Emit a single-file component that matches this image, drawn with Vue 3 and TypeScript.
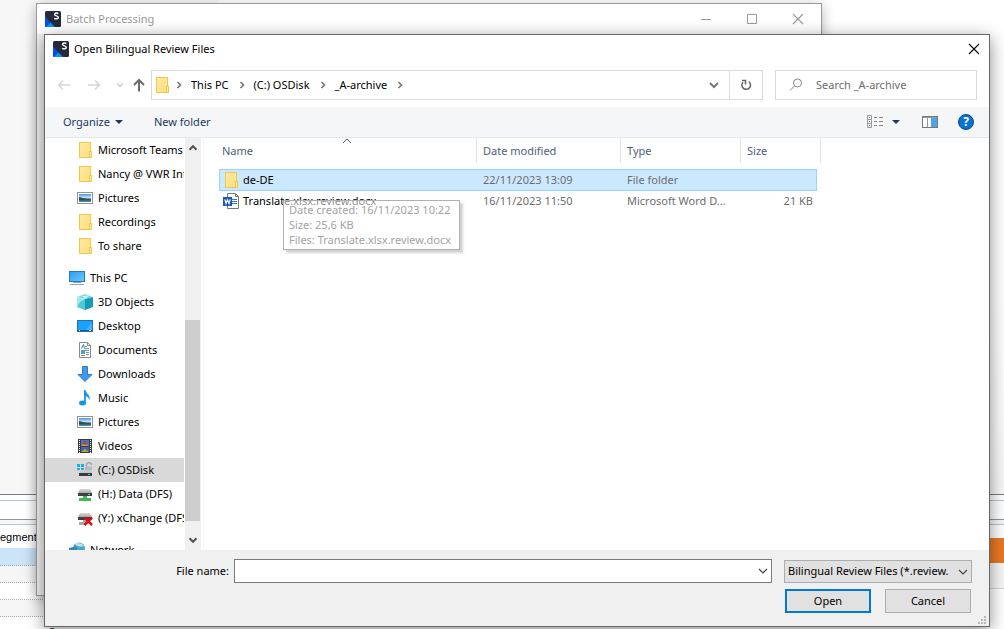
<script setup lang="ts">
import { ref } from 'vue'

interface TreeItem {
  label: string
  icon: string
  root?: boolean
  selected?: boolean
}

interface FileRow {
  name: string
  icon: string
  modified: string
  type: string
  size: string
}

const tree: TreeItem[] = [
  { label: 'Microsoft Teams', icon: 'folder' },
  { label: 'Nancy @ VWR International', icon: 'folder' },
  { label: 'Pictures', icon: 'pictures' },
  { label: 'Recordings', icon: 'folder' },
  { label: 'To share', icon: 'folder' },
  { label: 'This PC', icon: 'pc', root: true },
  { label: '3D Objects', icon: 'objects' },
  { label: 'Desktop', icon: 'desktop' },
  { label: 'Documents', icon: 'documents' },
  { label: 'Downloads', icon: 'downloads' },
  { label: 'Music', icon: 'music' },
  { label: 'Pictures', icon: 'pictures' },
  { label: 'Videos', icon: 'videos' },
  { label: '(C:) OSDisk', icon: 'osdisk', selected: true },
  { label: '(H:) Data (DFS)', icon: 'netdrive' },
  { label: '(Y:) xChange (DFS)', icon: 'lostdrive' },
  { label: 'Network', icon: 'network', root: true },
]

const files: FileRow[] = [
  { name: 'de-DE', icon: 'folder', modified: '22/11/2023 13:09', type: 'File folder', size: '' },
  { name: 'Translate.xlsx.review.docx', icon: 'word', modified: '16/11/2023 11:50', type: 'Microsoft Word D...', size: '21 KB' },
]

const crumbs = ['This PC', '(C:) OSDisk', '_A-archive']
const active = ref('de-DE')
const fileName = ref('')
const search = ref('')
</script>

<template>
  <main class="screen">
    <svg class="sprite" aria-hidden="true">
      <defs>
        <linearGradient id="g-folder" x1="0" y1="0" x2="1" y2="1"><stop offset="0" stop-color="#ffe9a2" /><stop offset="1" stop-color="#ffdf7e" /></linearGradient>
        <linearGradient id="g-blue" x1="0" y1="0" x2="1" y2="1"><stop offset="0" stop-color="#2a9ff5" /><stop offset="1" stop-color="#6cc8fb" /></linearGradient>
        <linearGradient id="g-sky" x1="0" y1="0" x2="0" y2="1"><stop offset="0" stop-color="#4c8ff0" /><stop offset=".5" stop-color="#d8ecf4" /><stop offset=".6" stop-color="#3f6a70" /><stop offset="1" stop-color="#5b8fa8" /></linearGradient>
        <linearGradient id="g-drive" x1="0" y1="0" x2="0" y2="1"><stop offset="0" stop-color="#d8d8d8" /><stop offset="1" stop-color="#a8a8a8" /></linearGradient>
      </defs>
      <symbol id="studio" viewBox="0 0 16 16">
        <rect width="16" height="16" rx="1.5" fill="#252a3a" />
        <path d="M0 5.500L9.500 16H1.500A1.500 1.500 0 0 1 0 14.500Z" fill="#0050f0" />
        <path d="M1 16L5.500 11.500 10 16Z" fill="#0a90f8" />
        <path d="M13.300 2.600C12.500 1.900 9.700 1.600 9.700 3.400C9.700 5.300 13.300 4.500 13.300 6.500C13.300 8.200 10.300 8.100 9.300 7.200" fill="none" stroke="#fff" stroke-width="1.500" />
      </symbol>
      <symbol id="folder" viewBox="0 0 16 16">
        <rect x="2.500" y=".5" width="11" height="15" fill="url(#g-folder)" stroke="#eec94e" />
        <rect x="12.500" y="9.500" width="2" height="6" fill="#ffeaa5" stroke="#eec94e" />
      </symbol>
      <symbol id="pictures" viewBox="0 0 16 16">
        <rect x=".5" y="2.500" width="15" height="11" fill="#fff" stroke="#949494" />
        <rect x="2" y="4" width="12" height="8" fill="url(#g-sky)" />
        <path d="M2 7C5 7.500 8 9 14 9.500V10.500H2Z" fill="#24525a" />
      </symbol>
      <symbol id="pc" viewBox="0 0 16 16">
        <rect x=".5" y="1.500" width="15" height="10" fill="url(#g-blue)" stroke="#287aa8" />
        <path d="M4 12.500H12M1 14.500H15" stroke="#90a8b8" />
      </symbol>
      <symbol id="objects" viewBox="0 0 16 16">
        <path d="M0 3L8 0L16 3L8 5Z" fill="#7ddbe5" />
        <path d="M0 3L8 5V16L0 13Z" fill="#9fe6ee" />
        <path d="M3 8L8 5V16L0 13Z" fill="#4fc8d8" />
        <path d="M16 3L8 5V16L16 13Z" fill="#139db4" />
        <path d="M5 2L12 1.500L8 5Z" fill="#c5f4f6" />
      </symbol>
      <symbol id="desktop" viewBox="0 0 16 16">
        <rect x=".5" y="2.500" width="15" height="11" fill="#18a2fb" stroke="#2470a0" />
        <path d="M9 12L15 4V12Z" fill="#40b4ff" />
        <path d="M1 12.500H15" stroke="#0b5c9a" />
        <path d="M2 12.500H3M12 12.500H14" stroke="#fff" />
      </symbol>
      <symbol id="documents" viewBox="0 0 16 16">
        <path d="M2.500 .5H10.500L13.500 3.500V15.500H2.500Z" fill="#fff" stroke="#8a8a8a" />
        <path d="M10.500 .5V3.500H13.500" fill="none" stroke="#8a8a8a" />
        <path d="M4.500 6.500L6.500 2.500L7.500 6.500" fill="none" stroke="#2c83bd" />
        <path d="M8 4.500H10M8 6.500H12M4 8.500H12M9 10.500H12M9 12.500H12M4 13.500H8" stroke="#6b93aa" />
        <rect x="4" y="9" width="4" height="3" fill="#4d9fcb" />
      </symbol>
      <symbol id="downloads" viewBox="0 0 16 16">
        <path d="M5.500 .5H10.500V8.500H15L8 15.500L1 8.500H5.500Z" fill="#3f9ae8" stroke="#2c7cc9" />
      </symbol>
      <symbol id="music" viewBox="0 0 16 16">
        <ellipse cx="5.500" cy="13" rx="3.500" ry="2.500" fill="#1494ec" />
        <path d="M7 0H8.500C9 4 14 5 12.500 10.500C12.500 8 10 6.500 8.800 6V13H7Z" fill="#1494ec" />
      </symbol>
      <symbol id="videos" viewBox="0 0 16 16">
        <rect x="1" y="1" width="14" height="14" fill="#3b3b3b" />
        <rect x="4" y="2" width="8" height="6" fill="#4b72cf" />
        <rect x="4" y="9" width="8" height="5" fill="#3568bd" />
        <path d="M4 8L7 5L12 8ZM4 14L8 11L12 14Z" fill="#d19d2d" />
        <circle cx="8" cy="5" r="2" fill="#9b523b" />
        <path d="M2.500 2V15M13.500 2V15" stroke="#fff" stroke-dasharray="1 1" />
      </symbol>
      <symbol id="osdisk" viewBox="0 0 16 16">
        <path d="M0 2H3V5H0ZM4 2H7V5H4ZM0 6H3V8H0ZM4 6H7V8H4Z" fill="#18b0ee" />
        <path d="M9.500 5V3C9.500 0 14.500 0 14.500 3" fill="none" stroke="#a0a8ae" stroke-width="1.500" />
        <path d="M8 4.500H15V8.500H8Z" fill="#b3bcc2" />
        <path d="M3 9H14L15 11H2Z" fill="#c7c7c7" />
        <rect x="2" y="11" width="13" height="3" fill="#383c3e" />
        <rect x="11" y="12" width="2" height="1" fill="#45df72" />
      </symbol>
      <symbol id="netdrive" viewBox="0 0 16 16">
        <path d="M3 3H13L15 7H1Z" fill="url(#g-drive)" />
        <rect x="1" y="7" width="14" height="3" fill="#3b4245" />
        <rect x="11" y="8" width="2" height="1" fill="#45df72" />
        <path d="M6 10H10V12H14V15H2V12H6Z" fill="#45b555" />
      </symbol>
      <symbol id="lostdrive" viewBox="0 0 16 16">
        <path d="M3 3H13L15 7H1Z" fill="url(#g-drive)" />
        <rect x="1" y="7" width="14" height="3" fill="#3b4245" />
        <path d="M6 10H9V15H2V12H6Z" fill="#a7a7a7" />
        <path d="M7.500 7.500L15 15M15 7.500L7.500 15" stroke="#d90f16" stroke-width="2.500" />
      </symbol>
      <symbol id="network" viewBox="0 0 16 16">
        <circle cx="10" cy="6.500" r="6" fill="#4aa5cd" />
        <path d="M6 2C8 0 13 1 15 4C12 5 8 5 6 2Z" fill="#b9e4f1" />
        <path d="M0 6L8 4V12H0Z" fill="#3487b9" />
      </symbol>
      <symbol id="word" viewBox="0 0 16 16">
        <path d="M4.500 .5H12.500L15.500 3.500V15.500H4.500Z" fill="#fff" stroke="#777" />
        <path d="M12.500 .5V3.500H15.500" fill="none" stroke="#777" />
        <path d="M9 6.500H14M9 8.500H14M9 10.500H14" stroke="#3274cf" />
        <rect y="4" width="9" height="9" fill="#1858bd" />
        <path d="M1.800 6.300L3 10.500L4.500 6.800L6 10.500L7.200 6.300" fill="none" stroke="#fff" stroke-width="1.200" />
      </symbol>
      <symbol id="chevron" viewBox="0 0 16 16">
        <path d="M4 6L8 10L12 6" fill="none" stroke="currentColor" stroke-width="var(--w, 1.500)" />
      </symbol>
      <symbol id="cross" viewBox="0 0 16 16">
        <path d="M3 3L13 13M13 3L3 13" fill="none" stroke="currentColor" stroke-width="1.100" />
      </symbol>
    </svg>

    <div class="backdrop" aria-hidden="true">
      <div class="strip left">
        <div class="pane"></div>
        <div class="tabs"></div>
        <div class="gap"></div>
        <div class="caption">egments</div>
        <div class="band"></div>
        <div class="line"></div>
        <div class="line"></div>
        <div class="line"></div>
        <div class="line number">8</div>
      </div>
      <div class="strip right">
        <div class="pane"></div>
        <div class="tabs"></div>
        <div class="gap"></div>
        <div class="spacer"></div>
        <div class="orange"></div>
        <div class="cell"></div>
      </div>
    </div>

    <section class="window batch" aria-label="Batch Processing">
      <header class="titlebar">
        <svg class="icon"><use href="#studio" /></svg>
        <span class="title">Batch Processing</span>
        <div class="controls">
          <button type="button" aria-label="Minimize"><svg viewBox="0 0 16 16"><path d="M3 8.500H13" stroke="currentColor" /></svg></button>
          <button type="button" aria-label="Maximize"><svg viewBox="0 0 16 16"><path d="M3.500 3.500H12.500V12.500H3.500Z" fill="none" stroke="currentColor" /></svg></button>
          <button type="button" aria-label="Close"><svg><use href="#cross" /></svg></button>
        </div>
      </header>
      <div class="batch-body"></div>
    </section>

    <section class="window dialog" role="dialog" aria-label="Open Bilingual Review Files">
      <header class="titlebar">
        <svg class="icon"><use href="#studio" /></svg>
        <h1 class="title">Open Bilingual Review Files</h1>
        <button type="button" class="close" aria-label="Close"><svg><use href="#cross" /></svg></button>
      </header>

      <nav class="navbar" aria-label="Location">
        <div class="history">
          <button type="button" aria-label="Back" disabled><svg viewBox="0 0 16 16"><path d="M14 8H3M7 3.500L2.500 8L7 12.500" /></svg></button>
          <button type="button" aria-label="Forward" disabled><svg viewBox="0 0 16 16"><path d="M2 8H13M9 3.500L13.500 8L9 12.500" /></svg></button>
          <button type="button" class="small" aria-label="Recent locations" disabled><svg><use href="#chevron" /></svg></button>
          <button type="button" class="up" aria-label="Up"><svg viewBox="0 0 16 16"><path d="M8 14.500V3M3 8L8 3L13 8" /></svg></button>
        </div>
        <div class="address">
          <svg class="icon"><use href="#folder" /></svg>
          <svg class="arrow"><use href="#chevron" /></svg>
          <template v-for="crumb in crumbs" :key="crumb">
            <button type="button" class="crumb">{{ crumb }}</button>
            <svg class="arrow"><use href="#chevron" /></svg>
          </template>
          <button type="button" class="drop" aria-label="Previous locations"><svg><use href="#chevron" /></svg></button>
          <button type="button" class="refresh" aria-label="Refresh">
            <svg viewBox="0 0 16 16"><path d="M10.800 4.600A4.300 4.300 0 1 1 5 5.200" /><path d="M4 3.500H7.500V7.500" /></svg>
          </button>
        </div>
        <label class="search">
          <svg viewBox="0 0 16 16"><circle cx="9.500" cy="6" r="4" /><path d="M6.500 9L2 13.500" /></svg>
          <input v-model="search" type="text" placeholder="Search _A-archive" aria-label="Search _A-archive" />
        </label>
      </nav>

      <div class="toolbar">
        <button type="button">Organize<i class="caret"></i></button>
        <button type="button" class="new">New folder</button>
        <div class="views">
          <button type="button" aria-label="Change your view">
            <svg class="list" viewBox="0 0 16 16">
              <path d="M.5 1.500H4.500V13.500H.5ZM.5 5.500H4.500M.5 9.500H4.500" fill="none" stroke="#9a9a9a" />
              <path d="M2 3.500H3M2 7.500H3M2 11.500H3" stroke="#4d6d8b" />
              <path d="M7 3.500H10M7 7.500H10M7 11.500H10M12 3.500H16M12 7.500H16M12 11.500H16" stroke="#858585" />
            </svg>
            <i class="caret"></i>
          </button>
          <button type="button" aria-label="Show the preview pane">
            <svg viewBox="0 0 16 16">
              <rect x=".5" y="2.500" width="15" height="11" fill="#fff" stroke="#777" />
              <path d="M1 3.500H15M5.500 4V13" stroke="#999" />
              <rect x="9" y="4" width="6" height="9" fill="#4ba4ec" />
            </svg>
          </button>
          <button type="button" class="help" aria-label="Get help">?</button>
        </div>
      </div>

      <div class="content">
        <aside class="sidebar">
          <ul class="tree">
            <li v-for="(item, i) in tree" :key="i" :class="{ root: item.root, selected: item.selected }">
              <svg class="icon"><use :href="'#' + item.icon" /></svg>
              <span>{{ item.label }}</span>
            </li>
          </ul>
          <div class="scrollbar" aria-hidden="true">
            <svg class="flip"><use href="#chevron" /></svg>
            <div class="track"><div class="thumb"></div></div>
            <svg><use href="#chevron" /></svg>
          </div>
        </aside>

        <div class="list-pane">
          <table>
            <colgroup><col class="c-name" /><col class="c-date" /><col class="c-type" /><col class="c-size" /></colgroup>
            <thead>
              <tr>
                <th scope="col">Name<svg class="sort"><use href="#chevron" /></svg></th>
                <th scope="col">Date modified</th>
                <th scope="col">Type</th>
                <th scope="col">Size</th>
              </tr>
            </thead>
            <tbody>
              <tr v-for="file in files" :key="file.name" :class="{ active: active === file.name }" @click="active = file.name">
                <td><div class="name"><svg class="icon"><use :href="'#' + file.icon" /></svg>{{ file.name }}</div></td>
                <td>{{ file.modified }}</td>
                <td>{{ file.type }}</td>
                <td class="size">{{ file.size }}</td>
              </tr>
            </tbody>
          </table>
          <div class="tooltip" role="tooltip">
            <div>Date created: 16/11/2023 10:22</div>
            <div>Size: 25,6 KB</div>
            <div>Files: Translate.xlsx.review.docx</div>
          </div>
        </div>
      </div>

      <footer class="footer">
        <div class="fields">
          <label for="file-name">File name:</label>
          <div class="combo">
            <input id="file-name" v-model="fileName" type="text" />
            <button type="button" aria-label="Recent file names"><svg><use href="#chevron" /></svg></button>
          </div>
          <div class="filter">
            <select aria-label="File type"><option>Bilingual Review Files (*.review.</option></select>
            <svg><use href="#chevron" /></svg>
          </div>
        </div>
        <div class="actions">
          <button type="button" class="primary">Open</button>
          <button type="button">Cancel</button>
        </div>
        <svg class="grip" viewBox="0 0 9 9"><path d="M6 0H8V2H6ZM3 3H5V5H3ZM6 3H8V5H6ZM0 6H2V8H0ZM3 6H5V8H3ZM6 6H8V8H6Z" fill="#b8b8b8" /></svg>
      </footer>
    </section>
  </main>
</template>

<style>
body {
  margin: 0;
  overflow: hidden;
}
</style>

<style scoped>
* {
  box-sizing: border-box;
}

.screen {
  position: relative;
  min-height: 100vh;
  overflow: hidden;
  font: 11px/16px "Noto Sans", "Open Sans", sans-serif;
  color: #000;
  background: #fff;
}

.sprite {
  position: absolute;
  width: 0;
  height: 0;
}

svg {
  display: block;
  flex: none;
  width: 16px;
  height: 16px;
}

button {
  display: flex;
  align-items: center;
  justify-content: center;
  margin: 0;
  padding: 0;
  border: 0;
  background: none;
  font: inherit;
  color: inherit;
}

.backdrop {
  position: absolute;
  inset: 0;
  display: flex;
  justify-content: space-between;
  overflow: hidden;
  background: linear-gradient(#f0f0f0 0 0) no-repeat 0 0 / 219px 4px, #fff;
}

.strip {
  display: flex;
  flex-direction: column;
}

.strip > div {
  flex: none;
}

.left {
  width: 219px;
}

.right {
  width: 182px;
}

.pane {
  height: 495px;
  border-bottom: 1px solid #777a84;
  background: #f7f7f7;
}

.right .pane {
  background: linear-gradient(#fff 60%, #f7f7f7);
}

.tabs {
  height: 20px;
  margin-top: 5px;
  border: solid #b3c7d0;
  border-width: 1px 0;
  border-bottom-color: #8f979e;
  background: #fff;
}

.strip .gap {
  height: 5px;
  border-bottom: 1px solid #b3c7d0;
  background: #f7f7f7;
}

.caption {
  height: 23px;
  padding-top: 4px;
  font: 11px/16px "Liberation Sans", Arial, sans-serif;
}

.band {
  height: 18px;
  border-bottom: 1px dotted #aaa;
  background: #cce4f7;
}

.line {
  height: 17px;
  border-bottom: 1px dotted #aaa;
}

.line:nth-child(even) {
  background: #f5f5f5;
}

.line.number {
  padding: 7px 0 0 49px;
  border: 0;
  background: #fff;
  font-family: "Liberation Sans", Arial, sans-serif;
}

.spacer {
  height: 13px;
}

.orange {
  height: 25px;
  background: #e87a24;
}

.cell {
  height: 26px;
  border-bottom: 1px solid #d6d6d6;
  background: #f7f7f7;
}

.window {
  position: absolute;
  display: flex;
  flex-direction: column;
  border: 1px solid #666;
  background: #fff;
}

.batch {
  top: 3px;
  right: 182px;
  bottom: 33px;
  left: 36px;
  border-color: #9a9a9a;
  color: #999;
  box-shadow: 0 3px 12px rgba(0, 0, 0, 0.3);
}

.batch-body {
  flex: 1;
  background: #f0f0f0;
}

.dialog {
  top: 34px;
  right: 14px;
  bottom: 2px;
  left: 44px;
  box-shadow: 0 4px 16px rgba(0, 0, 0, 0.45);
}

.titlebar {
  display: flex;
  align-items: center;
  gap: 5px;
  height: 30px;
  padding-left: 8px;
}

.title {
  flex: 1;
  margin: 0;
  font-size: inherit;
  font-weight: 400;
}

.controls {
  display: flex;
}

.controls button {
  width: 46px;
}

.dialog .titlebar {
  height: 28px;
}

.close {
  width: 30px;
}

.navbar {
  display: flex;
  align-items: center;
  height: 44px;
  padding: 0 12px 0 11px;
}

.history {
  display: flex;
  align-items: center;
  width: 95px;
  color: #d5d5d5;
}

.history button {
  width: 30px;
  justify-content: flex-start;
}

.history .small {
  width: 15px;
  margin-left: -4px;
  justify-content: center;
  color: #c4c4c4;
}

.history .small svg {
  width: 12px;
  height: 12px;
}

.history .up {
  width: 16px;
  margin-left: 4px;
  color: #6b6b6b;
}

.history path,
.refresh path {
  fill: none;
  stroke: currentColor;
  stroke-width: 1.5;
}

.history .up path {
  stroke-width: 2;
}

.address {
  display: flex;
  flex: 1;
  align-items: center;
  height: 30px;
  padding-left: 2px;
  border: 1px solid #d9d9d9;
}

.crumb {
  padding: 0 1px;
}

.arrow {
  width: 12px;
  height: 12px;
  margin: 0 5px 0 6px;
  color: #777;
  transform: rotate(-90deg);
  --w: 2.2;
}

.address .icon + .arrow {
  margin: 0 5px 0 3px;
}

.drop {
  width: 30px;
  margin-left: auto;
  color: #777;
  --w: 2;
}

.refresh {
  align-self: stretch;
  width: 33px;
  border-left: 1px solid #d9d9d9;
  color: #666;
}

.search {
  display: flex;
  align-items: center;
  gap: 12px;
  width: 202px;
  height: 30px;
  margin-left: 12px;
  padding-left: 12px;
  border: 1px solid #d9d9d9;
}

.search circle,
.search path {
  fill: none;
  stroke: #888;
}

input {
  min-width: 0;
  flex: 1;
  padding: 0;
  border: 0;
  outline: 0;
  background: none;
  font: inherit;
  color: inherit;
}

input::placeholder {
  color: #6d6d6d;
  opacity: 1;
}

.toolbar {
  display: flex;
  align-items: center;
  height: 31px;
  padding: 0 15px 0 18px;
  border-bottom: 1px solid #e6e7e8;
  background: #f5f6f7;
  color: #1e395b;
}

.caret {
  margin-left: 5px;
  border: 4px solid transparent;
  border-top-color: #1e395b;
  border-bottom: 0;
}

.new {
  margin-left: 31px;
}

.views {
  display: flex;
  align-items: center;
  gap: 20px;
  margin-left: auto;
}

.views .caret {
  margin: 0 2px 0 9px;
}

.help {
  width: 16px;
  height: 16px;
  border: 1px solid #064b8c;
  border-radius: 50%;
  background: #0872cf;
  color: #fff;
  font-size: 12px;
  font-weight: 700;
}

.content {
  display: flex;
  flex: 1;
  min-height: 0;
}

.sidebar {
  display: flex;
  width: 159px;
  border-right: 1px solid #f4f4f4;
}

.tree {
  flex: 1;
  height: 412px;
  margin: 0;
  padding: 0;
  overflow: hidden;
  list-style: none;
}

.tree li {
  display: flex;
  align-items: center;
  gap: 5px;
  height: 24px;
  padding-left: 32px;
  white-space: nowrap;
}

.tree .root {
  margin-top: 8px;
  padding-left: 24px;
}

.tree .selected {
  background: #d9d9d9;
}

.scrollbar {
  display: flex;
  flex-direction: column;
  align-items: center;
  width: 16px;
  margin: 0 2px 0 1px;
  padding: 3px 0;
  color: #555;
  background: #f0f0f0;
  --w: 2.4;
}

.scrollbar svg {
  width: 14px;
  height: 14px;
}

.flip {
  transform: rotate(180deg);
}

.track {
  display: flex;
  flex: 1;
  flex-direction: column;
  justify-content: flex-end;
  width: 100%;
  padding: 0 1px 12px 0;
}

.thumb {
  height: 201px;
  background: #cdcdcd;
}

.list-pane {
  position: relative;
  flex: 1;
  padding-left: 15px;
}

table {
  width: 598px;
  table-layout: fixed;
  border-spacing: 0;
}

.c-name {
  width: 258px;
}

.c-date {
  width: 144px;
}

.c-type {
  width: 120px;
}

.c-size {
  width: 76px;
}

th {
  position: relative;
  height: 25px;
  padding: 0 3px 0 6px;
  border-right: 1px solid #e5e5e5;
  text-align: left;
  font-weight: 400;
  color: #4c607a;
}

th:first-child {
  padding-left: 3px;
}

th:last-child {
  border: 0;
}

th:last-child::after {
  content: "";
  position: absolute;
  top: 0;
  right: -4px;
  width: 1px;
  height: 100%;
  background: #e5e5e5;
}

.sort {
  position: absolute;
  top: -5px;
  left: 120px;
  transform: rotate(180deg);
  --w: 1;
}

tbody::before {
  content: "";
  display: block;
  height: 6px;
}

td {
  height: 20px;
  padding: 0 3px 0 6px;
  border: solid transparent;
  border-width: 1px 0;
  white-space: nowrap;
  color: #6d6d6d;
}

td:first-child {
  padding-left: 3px;
  border-left-width: 1px;
}

td.size {
  border-right-width: 1px;
  text-align: right;
}

.active td {
  height: 22px;
  border-color: #99d1ff;
  background: #cce8ff;
}

.name {
  display: flex;
  align-items: center;
  gap: 4px;
  color: #000;
}

.tooltip {
  position: absolute;
  top: 62px;
  left: 79px;
  padding: 1px 8px 2px 5px;
  border: 1px solid #b0b0b0;
  background: rgba(255, 255, 255, 0.55);
  box-shadow: 3px 3px 2px rgba(0, 0, 0, 0.18);
  line-height: 15px;
  white-space: nowrap;
  color: #a3a3a3;
}

.footer {
  position: relative;
  padding: 9px 17px 13px;
  background: #f0f0f0;
}

.fields {
  display: flex;
  align-items: center;
}

.fields label {
  width: 167px;
  text-align: right;
}

.combo {
  display: flex;
  flex: 1;
  height: 24px;
  margin: 0 12px 0 5px;
  padding-left: 4px;
  border: 1px solid #7a7a7a;
  background: #fff;
}

.combo button {
  width: 17px;
  color: #444;
  --w: 1.2;
}

.filter {
  position: relative;
  width: 188px;
}

.filter select {
  width: 100%;
  height: 23px;
  padding: 0 18px 0 3px;
  border: 1px solid #adadad;
  border-radius: 0;
  appearance: none;
  background: #e1e1e1;
  font: inherit;
  color: inherit;
}

.filter svg {
  position: absolute;
  top: 4px;
  right: 1px;
  pointer-events: none;
  color: #444;
  --w: 1.2;
}

.actions {
  display: flex;
  justify-content: flex-end;
  gap: 14px;
  margin-top: 6px;
  padding-right: 1px;
}

.actions button {
  width: 86px;
  height: 24px;
  border: 1px solid #adadad;
  background: #e1e1e1;
}

.actions .primary {
  border: 2px solid #0078d7;
}

.grip {
  position: absolute;
  right: 2px;
  bottom: 1px;
  width: 9px;
  height: 9px;
}
</style>
